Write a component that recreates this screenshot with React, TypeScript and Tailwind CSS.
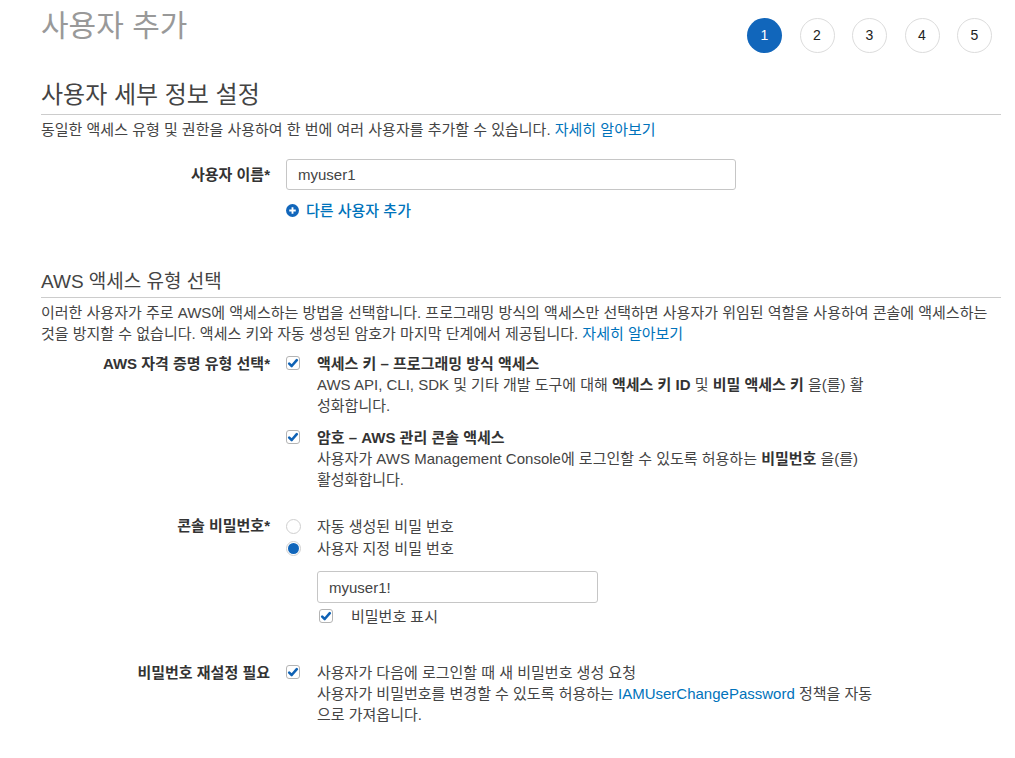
import React from "react";

const steps = [1, 2, 3, 4, 5];

function Check({ className = "" }: { className?: string }) {
  return (
    <span
      className={`flex h-[14px] w-[14px] shrink-0 items-center justify-center rounded-[3px] border border-[#b4b4b4] bg-white ${className}`}
    >
      <svg viewBox="0 0 12 12" className="h-[12px] w-[12px]">
        <path d="M2.2 6.6 4.7 9 9.8 3.2" fill="none" stroke="#0f62b5" strokeWidth="2.6" strokeLinecap="round" strokeLinejoin="round" />
      </svg>
    </span>
  );
}

function Radio({ on }: { on?: boolean }) {
  return (
    <span className="flex h-[15px] w-[15px] shrink-0 items-center justify-center rounded-full border border-[#cfcfcf] bg-white">
      {on && <span className="h-[11px] w-[11px] rounded-full bg-[#1166bb]" />}
    </span>
  );
}

function Label({ children }: { children: React.ReactNode }) {
  return <div className="w-[229px] shrink-0 text-right font-bold text-[#333]">{children}</div>;
}

export default function App() {
  return (
    <div className="min-h-[758px] w-[1015px] bg-white font-['Liberation_Sans','Noto_Sans_CJK_KR',sans-serif] text-[15px] leading-[21px] text-[#444]">
      <div className="pl-[41px] pr-[14px]">
        {/* header */}
        <div className="flex items-start justify-between pr-[9px]">
          <h1 className="mt-[8px] text-[30px] leading-[36px] text-[#999]">사용자 추가</h1>
          <div className="mt-[18px] flex gap-[17.5px]">
            {steps.map((s) => (
              <div
                key={s}
                className={`flex h-[35px] w-[35px] items-center justify-center rounded-full text-[14px] ${
                  s === 1 ? "bg-[#1166bb] text-white" : "border border-[#dcdcdc] text-[#222]"
                }`}
              >
                {s}
              </div>
            ))}
          </div>
        </div>

        {/* section 1 */}
        <h2 className="mt-[28px] border-b border-[#cccccc] pb-[5px] text-[24px] leading-[28px] text-[#444]">
          사용자 세부 정보 설정
        </h2>
        <p className="mt-[4px]">
          동일한 액세스 유형 및 권한을 사용하여 한 번에 여러 사용자를 추가할 수 있습니다.{" "}
          <a className="text-[#0073bb]">자세히 알아보기</a>
        </p>

        <div className="mt-[19px] flex items-center gap-[16px]">
          <Label>사용자 이름*</Label>
          <div className="flex h-[31px] w-[450px] items-center rounded-[3px] border border-[#c6c6c6] px-[11px] text-[#444]">
            myuser1
          </div>
        </div>
        <div className="ml-[245px] mt-[10px] flex items-center gap-[7px] text-[#0073bb]">
          <svg viewBox="0 0 14 14" className="h-[13px] w-[13px]">
            <circle cx="7" cy="7" r="7" fill="#1166bb" />
            <path d="M7 3.5v7M3.5 7h7" stroke="white" strokeWidth="2" />
          </svg>
          <span className="font-medium">다른 사용자 추가</span>
        </div>

        {/* section 2 */}
        <h2 className="mt-[49px] border-b border-[#cccccc] pb-[3px] text-[19px] leading-[24px] text-[#444]">
          AWS 액세스 유형 선택
        </h2>
        <div className="mt-[4px]">
          <div className="whitespace-nowrap">
            이러한 사용자가 주로 AWS에 액세스하는 방법을 선택합니다. 프로그래밍 방식의 액세스만 선택하면 사용자가 위임된 역할을 사용하여 콘솔에 액세스하는
          </div>
          <div className="whitespace-nowrap">
            것을 방지할 수 없습니다. 액세스 키와 자동 생성된 암호가 마지막 단계에서 제공됩니다.{" "}
            <a className="text-[#0073bb]">자세히 알아보기</a>
          </div>
        </div>

        {/* credential type */}
        <div className="mt-[9px] flex gap-[16px]">
          <Label>AWS 자격 증명 유형 선택*</Label>
          <div className="flex flex-col gap-[11px]">
            <div className="flex gap-[17px]">
              <Check className="mt-[3px]" />
              <div>
                <div className="font-bold text-[#333]">액세스 키 – 프로그래밍 방식 액세스</div>
                <div className="whitespace-nowrap">
                  AWS API, CLI, SDK 및 기타 개발 도구에 대해 <b className="text-[#333]">액세스 키 ID</b> 및{" "}
                  <b className="text-[#333]">비밀 액세스 키</b> 을(를) 활
                </div>
                <div>성화합니다.</div>
              </div>
            </div>
            <div className="flex gap-[17px]">
              <Check className="mt-[3px]" />
              <div>
                <div className="font-bold text-[#333]">암호 – AWS 관리 콘솔 액세스</div>
                <div className="whitespace-nowrap">
                  사용자가 AWS Management Console에 로그인할 수 있도록 허용하는 <b className="text-[#333]">비밀번호</b> 을(를)
                </div>
                <div>활성화합니다.</div>
              </div>
            </div>
          </div>
        </div>

        {/* console password */}
        <div className="mt-[25px] flex gap-[16px]">
          <Label>콘솔 비밀번호*</Label>
          <div className="flex flex-col">
            <div className="flex h-[22px] items-center gap-[16px]">
              <Radio />
              <span>자동 생성된 비밀 번호</span>
            </div>
            <div className="flex h-[22px] items-center gap-[16px]">
              <Radio on />
              <span>사용자 지정 비밀 번호</span>
            </div>
            <div className="ml-[31px] mt-[12px] flex h-[32px] w-[281px] items-center rounded-[3px] border border-[#c6c6c6] px-[11px]">
              myuser1!
            </div>
            <div className="ml-[33px] mt-[2px] flex h-[22px] items-center gap-[18px]">
              <Check />
              <span>비밀번호 표시</span>
            </div>
          </div>
        </div>

        {/* reset */}
        <div className="mt-[35px] flex gap-[16px]">
          <Label>비밀번호 재설정 필요</Label>
          <div className="flex gap-[17px]">
            <Check className="mt-[3px]" />
            <div>
              <div>사용자가 다음에 로그인할 때 새 비밀번호 생성 요청</div>
              <div className="whitespace-nowrap">
                사용자가 비밀번호를 변경할 수 있도록 허용하는 <a className="text-[#0073bb]">IAMUserChangePassword</a> 정책을 자동
              </div>
              <div>으로 가져옵니다.</div>
            </div>
          </div>
        </div>
      </div>
    </div>
  );
}
